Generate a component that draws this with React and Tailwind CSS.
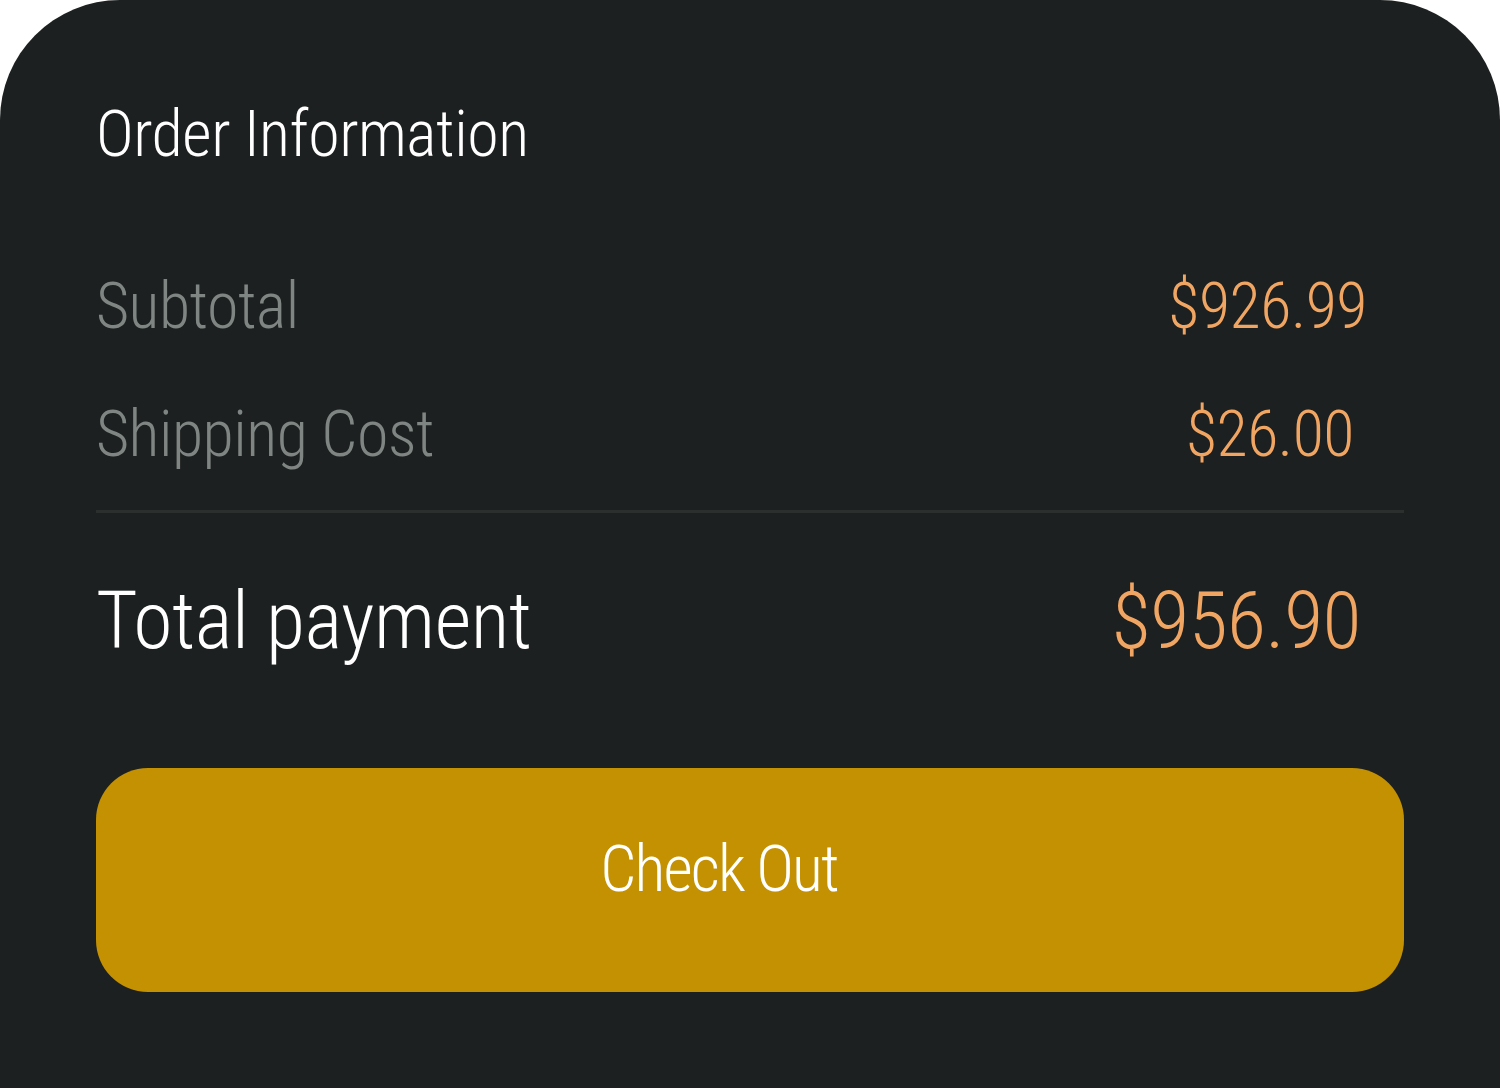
export default function App() {
  return (
    <div className="bg-white w-full h-[1088px] overflow-hidden">
      <div className="bg-[#1d2020] h-[1088px] rounded-t-[120px] px-[96px] pt-[103px] font-['Roboto_Condensed','Liberation_Sans_Narrow',sans-serif] font-light tracking-[-0.03em]">
        <h1 className="text-[64px] leading-[64px] text-white">Order Information</h1>

        <div className="mt-[108px] flex justify-between text-[64px] leading-[64px]">
          <span className="text-[#7f8583]">Subtotal</span>
          <span className="text-[#f1a562] mr-[37px]">$926.99</span>
        </div>

        <div className="mt-[64px] flex justify-between text-[64px] leading-[64px]">
          <span className="text-[#7f8583]">Shipping Cost</span>
          <span className="text-[#f1a562] mr-[50px]">$26.00</span>
        </div>

        <div className="mt-[43px] h-[3px] bg-[#2b2f2e]" />

        <div className="mt-[68px] flex justify-between text-[80px] leading-[80px]">
          <span className="text-white">Total payment</span>
          <span className="text-[#f1a562] mr-[43px]">$956.90</span>
        </div>

        <button className="mt-[107px] w-full h-[224px] rounded-[52px] bg-[#c49102] text-white text-[64px] leading-[64px] pb-[20px] pr-[62px] flex items-center justify-center tracking-[-0.03em]">
          Check Out
        </button>
      </div>
    </div>
  );
}
